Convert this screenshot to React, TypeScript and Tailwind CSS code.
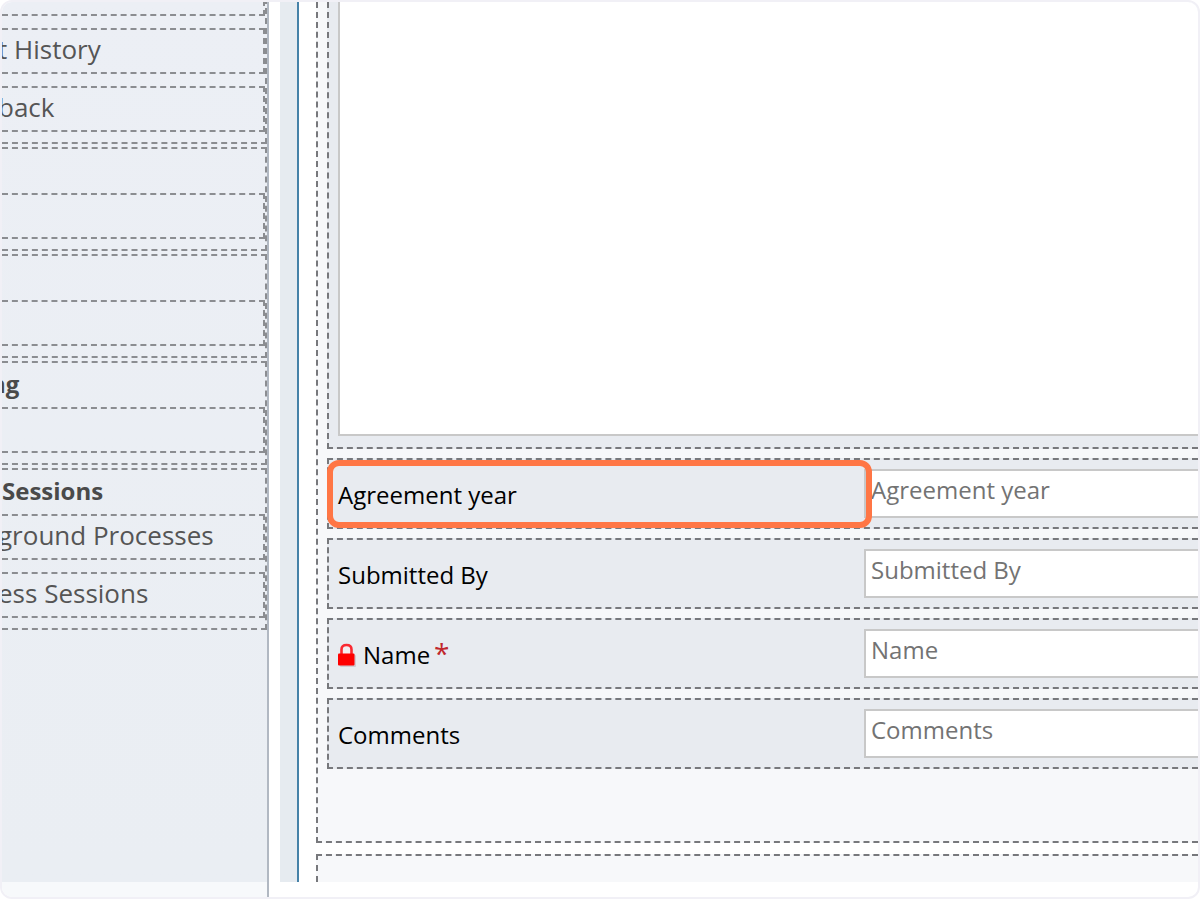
import clsx from "clsx";

type NavGroup = {
  title?: string;
  titleClass?: string;
  items: string[];
};

const navGroups: NavGroup[] = [
  { items: ["", "t History", "back"] },
  { title: "", items: [""] },
  { title: "", items: [""] },
  { title: "ng", titleClass: "-indent-3", items: [""] },
  { title: "Sessions", items: ["ground Processes", "ess Sessions"] },
];

type Field = {
  id: string;
  label: string;
  locked?: boolean;
  required?: boolean;
  selected?: boolean;
};

const fields: Field[] = [
  { id: "agreement-year", label: "Agreement year", selected: true },
  { id: "submitted-by", label: "Submitted By" },
  { id: "name", label: "Name", locked: true, required: true },
  { id: "comments", label: "Comments" },
];

function LockIcon() {
  return (
    <svg width="19" height="24" viewBox="0 0 19 24" className="shrink-0" aria-hidden="true">
      <rect x="2" y="12" width="16" height="12" rx="1" fill="#d0cbd2" />
      <path
        d="M3.5 11V6.5Q3.5 2 8.5 2T13.5 6.5V11"
        fill="#f3eef1"
        stroke="#fa2a32"
        strokeWidth="2.6"
      />
      <rect x="0" y="10.5" width="16.5" height="12" rx="1" fill="#fe0000" />
    </svg>
  );
}

function SideNav() {
  return (
    <aside className="flex w-[267px] shrink-0 flex-col border-r-2 border-[#b1b8c2] bg-[#f7f9fb]">
      <nav className="flex flex-1 flex-col gap-[3px] overflow-hidden bg-linear-to-b from-[#eceff5] to-[#eaeef3]">
        {navGroups.map((group, i) => (
          <section
            key={i}
            className={clsx(
              "border-y-2 border-r-2 border-dashed border-[#8b8d91] pb-[10px]",
              i === 0 && "-mt-[34px]"
            )}
          >
            {group.title !== undefined && (
              <h2
                className={clsx(
                  "h-11 text-2xl leading-[42px] font-bold text-[#4a4a4a]",
                  group.titleClass
                )}
              >
                {group.title}
              </h2>
            )}
            <ul className="flex flex-col gap-3">
              {group.items.map((item, j) => (
                <li
                  key={j}
                  className="h-[46px] border-y-2 border-r-2 border-dashed border-[#8b8d91] -indent-1 text-[26px] leading-[38px] whitespace-nowrap text-[#555]"
                >
                  {item && <a href="#">{item}</a>}
                </li>
              ))}
            </ul>
          </section>
        ))}
      </nav>
      <div className="h-[15px]" />
    </aside>
  );
}

function FieldRow({ field }: { field: Field }) {
  return (
    <div className="relative flex border-2 border-r-0 border-dashed border-[#77787c] bg-[#e8ebf0] py-[9px] pl-[9px]">
      <label
        htmlFor={field.id}
        className="flex w-[526px] shrink-0 items-center pt-[3px] text-2xl text-black"
      >
        {field.locked && <LockIcon />}
        <span className={clsx(field.locked && "ml-1.5")}>{field.label}</span>
        {field.required && (
          <span className="-mt-1 ml-1 text-[28px] leading-7 text-[#c0272d]">*</span>
        )}
      </label>
      <input
        id={field.id}
        type="text"
        placeholder={field.label}
        className="h-[49px] min-w-0 flex-1 border-2 border-r-0 border-[#c8c8c8] bg-white px-[5px] pb-2 text-2xl outline-none placeholder:text-[#737373]"
      />
      {/* selection outline around the label cell */}
      {field.selected && (
        <div className="pointer-events-none absolute top-0 -bottom-px -left-0.5 w-[545px] rounded-xl border-6 border-[#ff7645]" />
      )}
    </div>
  );
}

export default function App() {
  return (
    <div
      className="flex min-h-screen overflow-hidden rounded-xl border-2 border-[#f1f0f6] bg-white"
      style={{ fontFamily: '"Open Sans", "Noto Sans", sans-serif' }}
    >
      <SideNav />

      <main className="ml-[11px] flex min-w-0 flex-1 pb-[15px]">
        <div className="w-[19px] shrink-0 border-r-2 border-[#4682a8] bg-[#e6ebf0]" />

        <div className="ml-[17px] flex min-w-0 flex-1 flex-col gap-[11px]">
          <section className="border-b-2 border-l-2 border-dashed border-[#77787c] bg-[#f7f8fa] pb-[72px] pl-[9px]">
            <form className="flex flex-col gap-[9px]">
              <div className="border-b-2 border-l-2 border-dashed border-[#77787c] bg-[#e8ebf0] pb-[11px] pl-[9px]">
                <div className="h-[434px] border-b-2 border-l-2 border-[#c8c8c8] bg-white" />
              </div>
              {fields.map((field) => (
                <FieldRow key={field.id} field={field} />
              ))}
            </form>
          </section>

          <section className="flex-1 border-t-2 border-l-2 border-dashed border-[#77787c] bg-[#f7f8fa]" />
        </div>
      </main>
    </div>
  );
}
